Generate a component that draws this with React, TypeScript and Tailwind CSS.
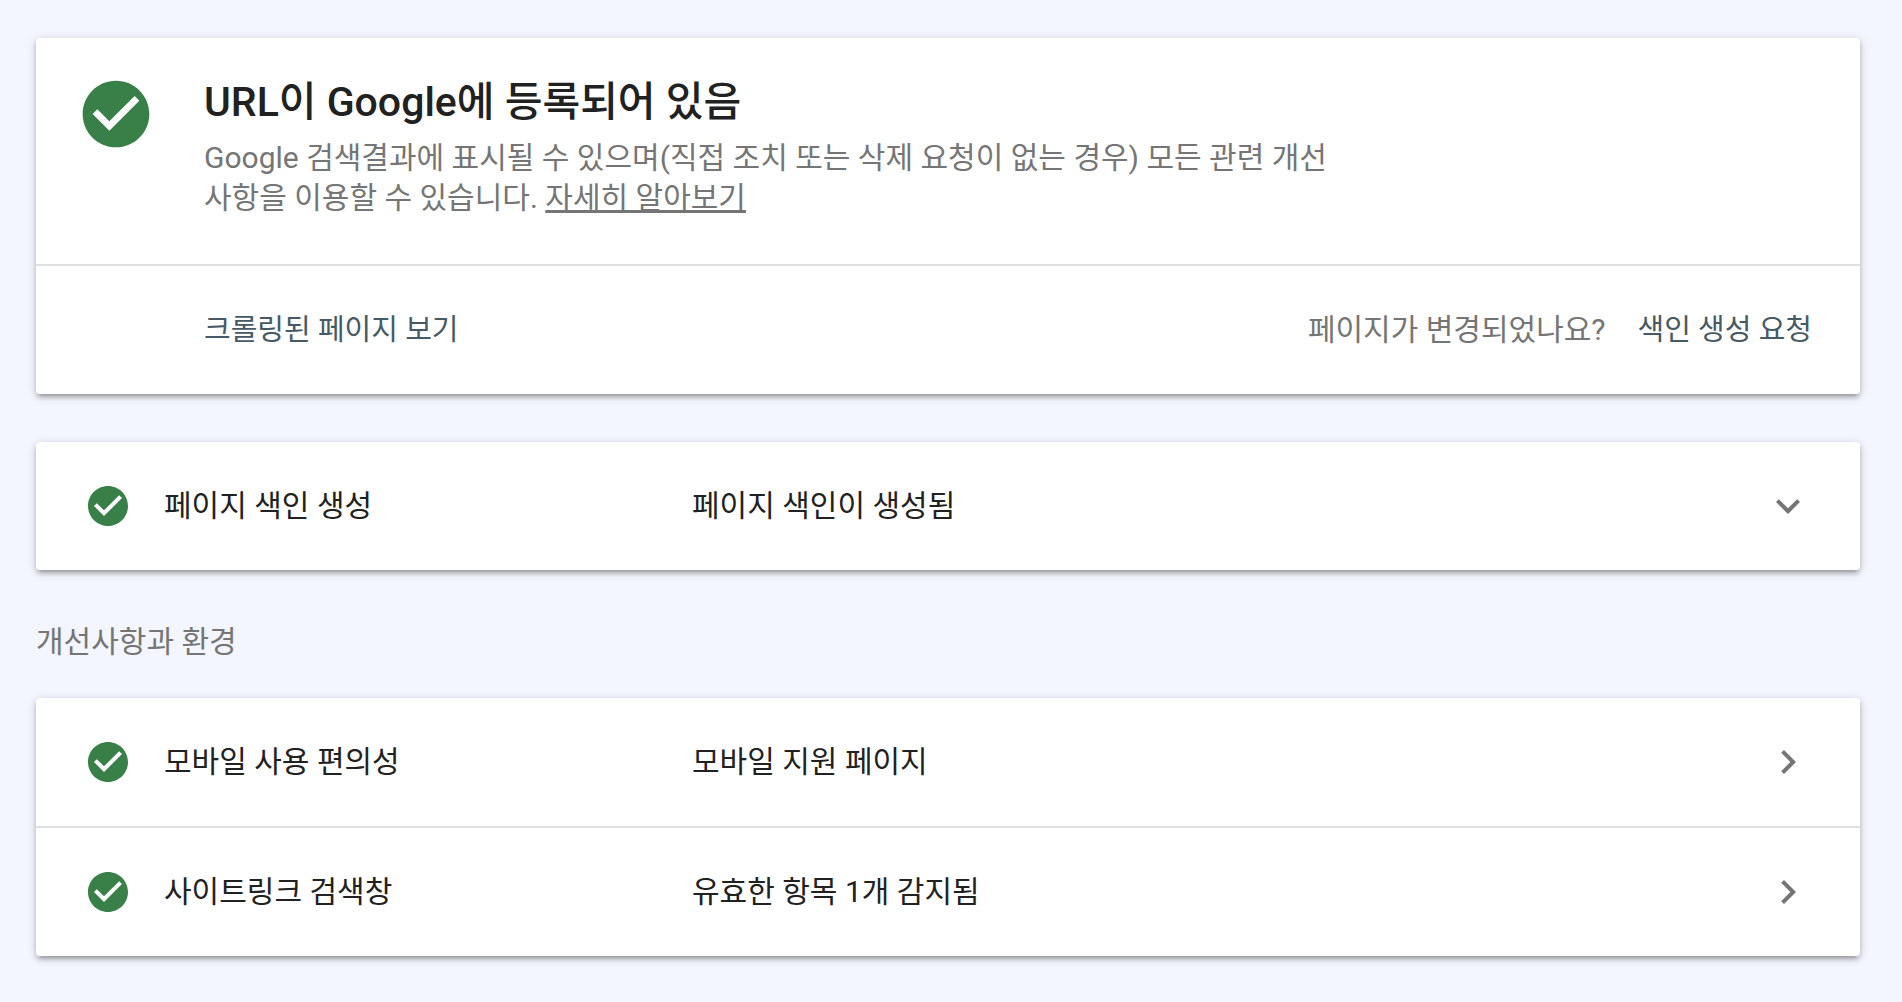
import React, { useState } from "react";
import { MdCheckCircle, MdChevronRight, MdExpandMore } from "react-icons/md";

interface ResultRowProps {
  title: string;
  value: string;
  expandable?: boolean;
}

const Card: React.FC<{ children: React.ReactNode }> = ({ children }) => (
  <section className="rounded bg-white shadow-[0_4px_4px_0_rgba(0,0,0,0.14),0_6px_2px_-4px_rgba(0,0,0,0.12),0_2px_10px_0_rgba(0,0,0,0.2)]">
    {children}
  </section>
);

const ResultRow: React.FC<ResultRowProps> = ({ title, value, expandable }) => {
  const [open, setOpen] = useState(false);

  return (
    <button
      type="button"
      aria-expanded={expandable ? open : undefined}
      onClick={() => setOpen(!open)}
      className="flex h-32 w-full items-center px-12 text-left text-[30px] leading-10 text-[#212121]"
    >
      <MdCheckCircle className="mr-8 size-12 shrink-0 text-[#388048]" />
      <span className="w-[528px] shrink-0">{title}</span>
      <span className="flex-1">{value}</span>
      {expandable ? (
        <MdExpandMore className="size-12 shrink-0 text-[#757575]" />
      ) : (
        <MdChevronRight className="size-12 shrink-0 text-[#757575]" />
      )}
    </button>
  );
};

const App: React.FC = () => {
  return (
    <main
      lang="ko"
      className="min-h-screen bg-[#f3f6fe] px-9 pt-[38px] pb-11 font-[Roboto,'Noto_Sans_CJK_KR',sans-serif]"
    >
      <div className="mr-1.5">
        {/* Verdict */}
        <Card>
          <div className="flex items-start gap-12 border-b-2 border-[#e0e0e0] px-10 pt-9 pb-[46px]">
            <MdCheckCircle className="size-20 shrink-0 text-[#388048]" />
            <div className="max-w-[1160px] break-keep">
              <h1 className="text-[41px] leading-[56px] font-medium text-[#212121]">
                URL이 Google에 등록되어 있음
              </h1>
              <p className="mt-2 text-[30px] leading-10 text-[#757575]">
                Google 검색결과에 표시될 수 있으며(직접 조치 또는 삭제 요청이 없는 경우) 모든 관련 개선
                사항을 이용할 수 있습니다.{" "}
                <a href="#learn-more" className="underline">
                  자세히 알아보기
                </a>
              </p>
            </div>
          </div>
          <div className="flex h-32 items-center justify-between pr-12 pl-[168px] leading-10">
            <button type="button" className="text-[29px] text-[#455a64]">
              크롤링된 페이지 보기
            </button>
            <div className="flex items-center gap-8">
              <span className="text-[30px] text-[#757575]">페이지가 변경되었나요?</span>
              <button type="button" className="text-[29px] text-[#455a64]">
                색인 생성 요청
              </button>
            </div>
          </div>
        </Card>

        <div className="mt-12">
          <Card>
            <ResultRow title="페이지 색인 생성" value="페이지 색인이 생성됨" expandable />
          </Card>
        </div>

        {/* Enhancements */}
        <h2 className="pt-[52px] pb-9 text-[30px] leading-10 text-[#757575]">개선사항과 환경</h2>
        <Card>
          <ul className="divide-y-2 divide-[#e0e0e0]">
            <li>
              <ResultRow title="모바일 사용 편의성" value="모바일 지원 페이지" />
            </li>
            <li>
              <ResultRow title="사이트링크 검색창" value="유효한 항목 1개 감지됨" />
            </li>
          </ul>
        </Card>
      </div>
    </main>
  );
};

export default App;
